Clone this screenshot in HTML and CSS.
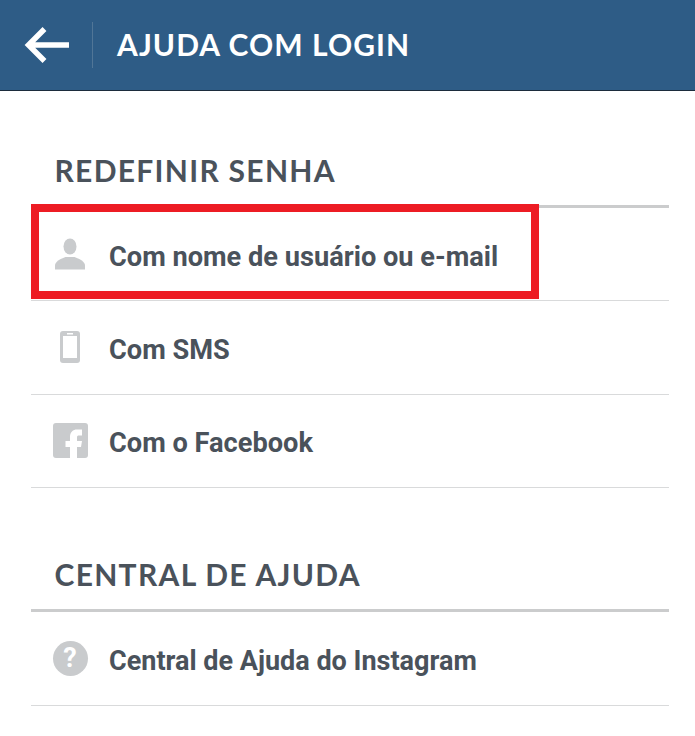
FILE: index.html
```html
<!DOCTYPE html>
<html lang="pt-BR">
<head>
    <meta charset="UTF-8">
    <meta name="viewport" content="width=device-width, initial-scale=1.0">
    <title>Ajuda com login</title>
    <link rel="stylesheet" href="styles.css">
</head>
<body>
    <header class="topbar">
        <button class="back" aria-label="Voltar">
            <svg width="46" height="38" viewBox="0 0 46 38"><path d="M45 19H5M20.500 3 4.500 19 20.500 35" fill="none" stroke="#fff" stroke-width="5.500"/></svg>
        </button>
        <h1 class="title">AJUDA COM LOGIN</h1>
    </header>

    <main class="content">
        <section class="group">
            <h2 class="group-title">REDEFINIR SENHA</h2>
            <ul class="rows">
                <li class="row">
                    <span class="row-icon">
                        <svg width="30" height="32" viewBox="0 0 30 32"><ellipse cx="15" cy="8.500" rx="6.500" ry="8" fill="#c9cbcd"/><path d="M0 31.500v-4c0-4 6-7 10.500-8.500h9c4.500 1.500 10.500 4.500 10.500 8.500v4z" fill="#c9cbcd"/></svg>
                    </span>
                    <span class="row-label">Com nome de usuário ou e-mail</span>
                    <span class="highlight"></span>
                </li>
                <li class="row">
                    <span class="row-icon">
                        <svg width="20" height="32" viewBox="0 0 20 32"><rect width="20" height="32" rx="3" fill="#c9cbcd"/><rect x="3" y="5" width="14" height="22" fill="#fff"/><rect x="7" y="2" width="6" height="1.500" fill="#fff"/></svg>
                    </span>
                    <span class="row-label">Com SMS</span>
                </li>
                <li class="row">
                    <span class="row-icon">
                        <svg width="35" height="35" viewBox="0 0 35 35"><rect width="35" height="35" rx="3" fill="#c9cbcd"/><path d="M17 35V24h-4.500v-6H17v-4c0-5 3-7.500 7-7.500h5v6h-3c-1.500 0-2 .5-2 2v3.500h5l-1 6h-4v11z" fill="#fff"/></svg>
                    </span>
                    <span class="row-label">Com o Facebook</span>
                </li>
            </ul>
        </section>

        <section class="group">
            <h2 class="group-title">CENTRAL DE AJUDA</h2>
            <ul class="rows">
                <li class="row row-help">
                    <span class="row-icon"><span class="help-icon">?</span></span>
                    <span class="row-label">Central de Ajuda do Instagram</span>
                </li>
            </ul>
        </section>
    </main>
</body>
</html>
```

FILE: styles.css
```css
* {
    box-sizing: border-box;
}
body {
    margin: 0;
    background: #fff;
    font-family: Roboto, 'Liberation Sans', sans-serif;
    color: #4a525b;
}
.topbar {
    display: flex;
    align-items: center;
    height: 91px;
    background: #2e5c86;
    border-bottom: 1px solid #1c2c3c;
}
.back {
    display: flex;
    align-items: center;
    width: 93px;
    height: 46px;
    padding: 0 0 0 24px;
    background: none;
    border: none;
    border-right: 1px solid #517697;
}
.title {
    margin: 0 0 0 24px;
    padding-bottom: 3px;
    font-family: Lato, sans-serif;
    font-size: 30px;
    font-weight: 700;
    letter-spacing: 1.05px;
    color: #fff;
}
.content {
    padding: 0 26px 0 31px;
}
.group {
    padding-top: 58px;
}
.group + .group {
    padding-top: 65px;
}
.group-title {
    margin: 0;
    padding-left: 23.5px;
    height: 59px;
    font-family: Lato, sans-serif;
    font-size: 30px;
    line-height: 42px;
    font-weight: 700;
    letter-spacing: 1.3px;
    color: #4a525b;
    border-bottom: 3px solid #cbcccd;
}
.rows {
    margin: 0;
    padding: 0;
    list-style: none;
}
.row {
    position: relative;
    display: flex;
    align-items: center;
    height: 93.3px;
    font-size: 27.2px;
    font-weight: 700;
    border-bottom: 1px solid #d9dadb;
}
.row-help {
    height: 94px;
    font-size: 27px;
}
.row-icon {
    display: flex;
    justify-content: center;
    align-items: center;
    width: 78px;
}
.row-label {
    padding-top: 5px;
}
.help-icon {
    width: 35px;
    height: 35px;
    border-radius: 50%;
    background: #c9cbcd;
    color: #fff;
    font-size: 27px;
    line-height: 35px;
    text-align: center;
}
.highlight {
    position: absolute;
    left: 0;
    top: -4px;
    width: 508px;
    height: 95px;
    border: 8px solid #ed1c24;
}
```
